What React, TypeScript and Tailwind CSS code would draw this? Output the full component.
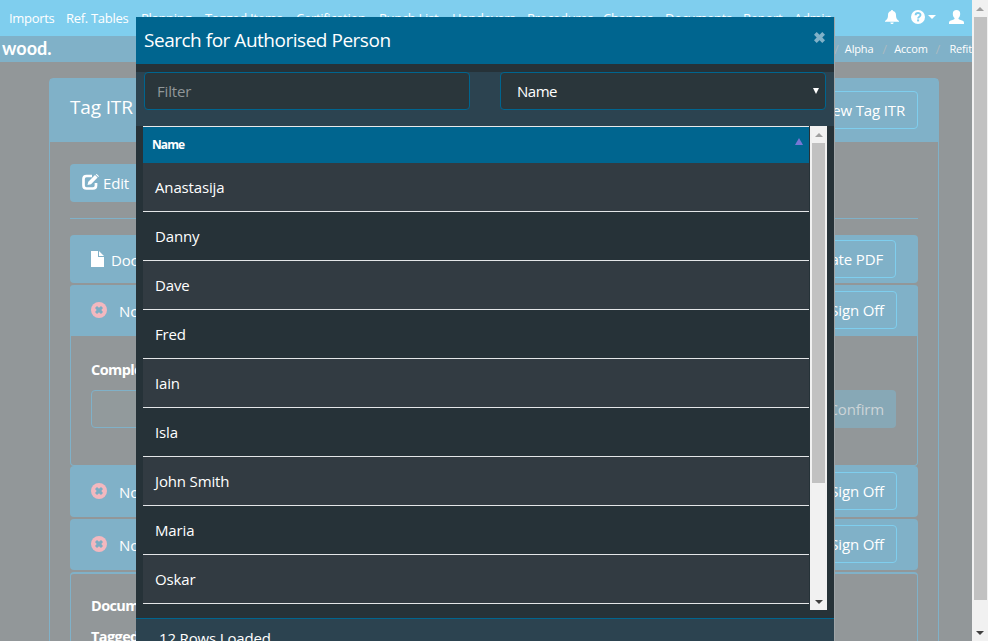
import type { ReactNode } from "react";

const nav: [string, string][] = [
  ["Imports", "w-[57px]"],
  ["Ref. Tables", "w-[75px]"],
  ["Planning", "w-[64px]"],
  ["Tagged Items", "w-[91px]"],
  ["Certification", "w-[83px]"],
  ["Punch List", "w-[73px]"],
  ["Handovers", "w-[75px]"],
  ["Procedures", "w-[76px]"],
  ["Changes", "w-[62px]"],
  ["Documents", "w-[78px]"],
  ["Report", "w-[51px]"],
  ["Admin", "w-[60px]"],
];

const people = ["Anastasija", "Danny", "Dave", "Fred", "Iain", "Isla", "John Smith", "Maria", "Oskar"];

function CrossCircle() {
  return (
    <svg viewBox="0 0 16 16" className="mr-3 size-4 shrink-0">
      <circle cx="8" cy="8" r="8" fill="#f3b8bf" />
      <path d="M4 6 6 4 8 5.700 10 4 12 6 10.300 8 12 10 10 12 8 10.300 6 12 4 10 5.700 8Z" fill="#7cadc4" />
    </svg>
  );
}

function OutlineButton({ children, className = "" }: { children: ReactNode; className?: string }) {
  return (
    <button className={`flex h-[38px] items-center justify-end whitespace-nowrap rounded border border-[#7fceee] px-3 ${className}`}>
      {children}
    </button>
  );
}

function SignOffHeader({ className = "" }: { className?: string }) {
  return (
    <div className={`flex h-[51px] items-center justify-between rounded-t bg-[#80b1c8] pb-px pl-[21px] pr-[21px] ${className}`}>
      <div className="flex items-center">
        <CrossCircle />
        <span className="pt-0.5">No</span>
      </div>
      <OutlineButton className="w-[98px]">Sign Off</OutlineButton>
    </div>
  );
}

function ScrollBar({ className = "", thumb }: { className?: string; thumb: string }) {
  return (
    <div className={`flex shrink-0 flex-col items-center bg-[#f1f1f1] ${className}`}>
      <div className="flex h-[17px] shrink-0 items-center justify-center">
        <svg viewBox="0 0 8 4" className="h-1 w-2"><path d="M0 4 4 0l4 4Z" fill="#a0a0a0" /></svg>
      </div>
      <div className={`w-[13px] shrink-0 bg-[#c1c1c1] ${thumb}`} />
      <div className="mt-auto flex h-[17px] shrink-0 items-center justify-center">
        <svg viewBox="0 0 8 4" className="h-1 w-2"><path d="M0 0h8L4 4Z" fill="#404040" /></svg>
      </div>
    </div>
  );
}

function Page() {
  return (
    <div className="h-[641px] min-w-0 flex-1 overflow-hidden bg-[#929799]">
      <nav className="flex h-9 items-center bg-[#7fceee] pl-[9px] text-[13px] tracking-[-0.3px]">
        {nav.map(([label, width]) => (
          <span key={label} className={`shrink-0 whitespace-nowrap pt-px ${width}`}>{label}</span>
        ))}
        <svg viewBox="0 0 14 14" className="mb-0.5 ml-[31px] h-[14px] w-[14px] shrink-0 fill-white">
          <path d="M7 0c.7 0 1 .4 1 1 2.100.4 3 2 3 4 0 3 .6 4.500 3 6v.8H0V11c2.400-1.500 3-3 3-6 0-2 .9-3.600 3-4 0-.6.300-1 1-1ZM5.300 12.500h3.400c-.2 1-.8 1.500-1.700 1.500s-1.500-.5-1.700-1.500Z" />
        </svg>
        <svg viewBox="0 0 14 14" className="mb-0.5 ml-3 size-[14px] shrink-0">
          <circle cx="7" cy="7" r="7" fill="#fff" />
          <path d="M4.600 5.300C4.600 2.300 9.500 2.400 9.500 5.100 9.500 6.800 7.100 6.800 7.100 8.400" fill="none" stroke="#7fceee" strokeWidth="1.900" />
          <path d="M6.100 9.400h2v2h-2Z" fill="#7fceee" />
        </svg>
        <svg viewBox="0 0 8 4" className="mb-0.5 ml-[3px] h-1 w-2 shrink-0 fill-white"><path d="M0 0h8L4 4Z" /></svg>
        <svg viewBox="0 0 15 14" className="mb-0.5 ml-[13px] h-[14px] w-[15px] shrink-0 fill-white">
          <path d="M7.500 0c2.300 0 3.700 1.300 3.700 3.700 0 1.900-.6 3.300-1.700 4.200v1.200c1.500 1 4.300 1.500 5.200 2.500.3.400.3 1.400.3 2.400H0c0-1 0-2 .3-2.400.9-1 3.700-1.500 5.200-2.500V7.900C4.400 7 3.800 5.600 3.800 3.700 3.800 1.300 5.200 0 7.500 0Z" />
        </svg>
      </nav>
      <div className="flex h-[26px] items-center justify-between overflow-hidden bg-[#80b1c8]">
        <span className="pb-0.5 pl-[2px] font-[Lato,sans-serif] text-[18px] font-bold tracking-normal">wood.</span>
        <div className="flex w-[138px] shrink-0 items-center whitespace-nowrap pt-px text-[11px]">
          <span className="w-[11px] text-[13px] text-[#a9bac1]">/</span>
          <span className="w-[38px]">Alpha</span>
          <span className="w-[12px] text-[13px] text-[#a9bac1]">/</span>
          <span className="w-[42px]">Accom</span>
          <span className="w-[14px] text-[13px] text-[#a9bac1]">/</span>
          <span>Refit</span>
        </div>
      </div>
      <main className="ml-[49px] mt-4 h-[700px] w-[890px] rounded-t border border-[#80b1c8]">
        <header className="flex h-[63px] items-center justify-between bg-[#80b1c8] px-5 pb-px">
          <h1 className="pb-[5px] text-[19px]">Tag ITR</h1>
          <OutlineButton className="w-[150px] pt-px">New Tag ITR</OutlineButton>
        </header>
        <div className="px-5 pt-[22px]">
          <button className="flex h-[38px] w-[100px] items-center gap-1 rounded bg-[#80b1c8] pl-3">
            <svg viewBox="0 0 17 16" className="mb-0.5 h-4 w-[17px]">
              <path d="M10 2H4.500Q1.500 2 1.500 5v6.500q0 3 3 3H11q3 0 3-3V9" fill="none" stroke="#fff" strokeWidth="2.700" />
              <path d="m5.500 11 .8-3.300L13 1l2.600 2.500L9 10.200ZM13.700.4l1-.4L17 2.300l-.7.700Z" fill="#fff" />
            </svg>
            Edit
          </button>
          <hr className="mb-4 mt-4 border-[#80b1c8]" />
          <section className="mb-0.5 flex h-12 items-center justify-between rounded bg-[#80b1c8] pl-[21px] pr-[22px]">
            <div className="flex items-center">
              <svg viewBox="0 0 13 16" className="mr-[7px] h-4 w-[13px] fill-white"><path d="M0 0h7v6h6v10H0ZM8 0l5 5H8Z" /></svg>
              <span className="pt-0.5">Doc</span>
            </div>
            <OutlineButton className="w-[125px]">Generate PDF</OutlineButton>
          </section>
          <section className="h-[181px] rounded border border-t-0 border-[#80b1c8]">
            <SignOffHeader className="-mx-px" />
            <div className="pl-5 pr-[21px] pt-[22px]">
              <p className="h-8 text-[14.5px] font-bold leading-6 tracking-[-0.6px]">Complete</p>
              <div className="flex justify-between">
                <div className="h-[38px] w-[500px] rounded border border-[#80b1c8] bg-[#929a9c]" />
                <button className="flex h-[38px] w-[98px] items-center justify-end rounded bg-[#87a8b6] pr-3 text-[#ccd4d8]">Confirm</button>
              </div>
            </div>
          </section>
          <SignOffHeader className="mb-0.5 rounded-b" />
          <SignOffHeader className="mb-0.5 rounded-b" />
          <section className="h-[200px] rounded border border-t-2 border-[#80b1c8] pl-5 pt-5 text-[14.5px] font-bold tracking-[-0.6px]">
            <p className="h-8 leading-6">Docum</p>
            <p>Tagged</p>
          </section>
        </div>
      </main>
    </div>
  );
}

function Modal() {
  return (
    <div className="absolute left-[136px] top-[17px] flex h-[624px] w-[698px] flex-col overflow-hidden bg-[#263238] shadow-[1px_0_0_0_#a0a5a7]">
      <header className="flex h-[47px] shrink-0 items-center justify-between bg-[#00658f] pl-2 pr-[9px]">
        <h2 className="text-[19px] tracking-[-0.48px]">Search for Authorised Person</h2>
        <svg viewBox="0 0 11 11" className="mb-[7px] size-[11px] fill-[#80b1c8]">
          <path d="M2.700 0 5.500 2.700 8.300 0 11 2.700 8.300 5.500 11 8.300 8.300 11 5.500 8.300 2.700 11 0 8.300 2.700 5.500 0 2.700Z" />
        </svg>
      </header>
      <div className="mt-2 flex h-[54px] shrink-0 justify-between bg-[#2c4350] px-2">
        <div className="flex h-[38px] w-[326px] items-center rounded border border-[#00658f] bg-[#2a363b] pl-3 text-[#919799]">Filter</div>
        <div className="flex h-[38px] w-[326px] items-center justify-between rounded border border-[#00658f] bg-[#2a363b] pl-4 pr-[6px]">
          <span className="tracking-[-0.5px]">Name</span>
          <svg viewBox="0 0 6 6" className="size-[6px] fill-white"><path d="M0 0h6L3 6Z" /></svg>
        </div>
      </div>
      <div className="flex h-[484px] shrink-0 pl-[7px]">
        <div className="w-[666px]">
          <div className="flex h-[37px] justify-between border-t border-[#e9eaeb] bg-[#00658f] pl-[9px] pr-[6px]">
            <span className="pt-2 text-[12px] font-bold leading-5 tracking-[-0.9px]">Name</span>
            <svg viewBox="0 0 8 7" className="mt-[11px] h-[7px] w-2 fill-[#7777d5]"><path d="M0 7 4 0l4 7Z" /></svg>
          </div>
          {people.map((person) => (
            <div key={person} className="flex h-[49px] items-center border-b border-[#e4e6e8] pl-3 odd:bg-[#263238] even:bg-[#323b42]">
              {person}
            </div>
          ))}
        </div>
        <ScrollBar className="ml-px w-[17px]" thumb="h-[340px]" />
      </div>
      <footer className="mt-2 h-[23px] shrink-0 border-t border-[#00658f] bg-[#2c4350] pl-[23px] pt-2">12 Rows Loaded</footer>
    </div>
  );
}

export default function App() {
  return (
    <div className="relative flex h-[641px] w-[988px] overflow-hidden font-['Open_Sans','Noto_Sans',sans-serif] text-[15px] font-[450] tracking-[-0.15px] text-white">
      <Page />
      <ScrollBar className="h-[641px] w-4" thumb="h-[583px]" />
      <Modal />
    </div>
  );
}
